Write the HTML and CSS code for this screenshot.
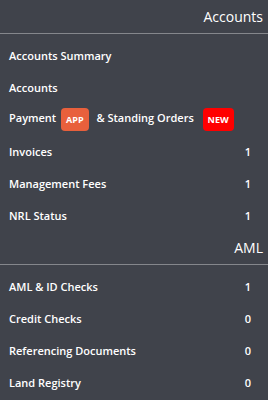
FILE: index.html
```html
<!DOCTYPE html>
<html lang="en">
<head>
  <meta charset="UTF-8">
  <meta name="viewport" content="width=device-width, initial-scale=1.0">
  <link rel="stylesheet" href="styles.css">
  <title>Accounts</title>
</head>
<body>
  <div class="menu">
    <h2 class="section-title">Accounts</h2>
    <ul class="menu-list">
      <li><span>Accounts Summary</span></li>
      <li><span>Accounts</span></li>
      <li><span>Payment <b class="badge app">APP</b> &amp; Standing Orders <b class="badge new">NEW</b></span></li>
      <li><span>Invoices</span><span class="count">1</span></li>
      <li><span>Management Fees</span><span class="count">1</span></li>
      <li><span>NRL Status</span><span class="count">1</span></li>
    </ul>
    <h2 class="section-title">AML</h2>
    <ul class="menu-list">
      <li><span>AML &amp; ID Checks</span><span class="count">1</span></li>
      <li><span>Credit Checks</span><span class="count">0</span></li>
      <li><span>Referencing Documents</span><span class="count">0</span></li>
      <li><span>Land Registry</span><span class="count">0</span></li>
    </ul>
  </div>
</body>
</html>
```

FILE: styles.css
```css
body {
  margin: 0;
  padding: 0;
  background-color: #40434b;
  font-family: 'Open Sans', sans-serif;
  color: #fff;
}
.menu {
  width: 268px;
}
.section-title {
  margin: 0;
  height: 33px;
  line-height: 33px;
  text-align: right;
  padding-right: 5px;
  font-size: 14px;
  font-weight: 400;
  border-bottom: 1px solid #85878c;
}
.menu-list {
  list-style-type: none;
  margin: 0;
  padding: 5px 0 0 0;
}
.menu-list li {
  display: flex;
  justify-content: space-between;
  align-items: center;
  height: 32px;
  padding: 0 17px 0 9px;
  font-size: 11px;
  font-weight: 600;
  white-space: nowrap;
}
.badge {
  display: inline-block;
  padding: 0 5px;
  height: 23px;
  line-height: 23px;
  border-radius: 4px;
  font-size: 9px;
  font-weight: 700;
  vertical-align: middle;
  margin: 0 5px 0 2px;
}
.app {
  background-color: #e8603c;
}
.new {
  background-color: #ff0000;
  margin-left: 6px;
}
```
